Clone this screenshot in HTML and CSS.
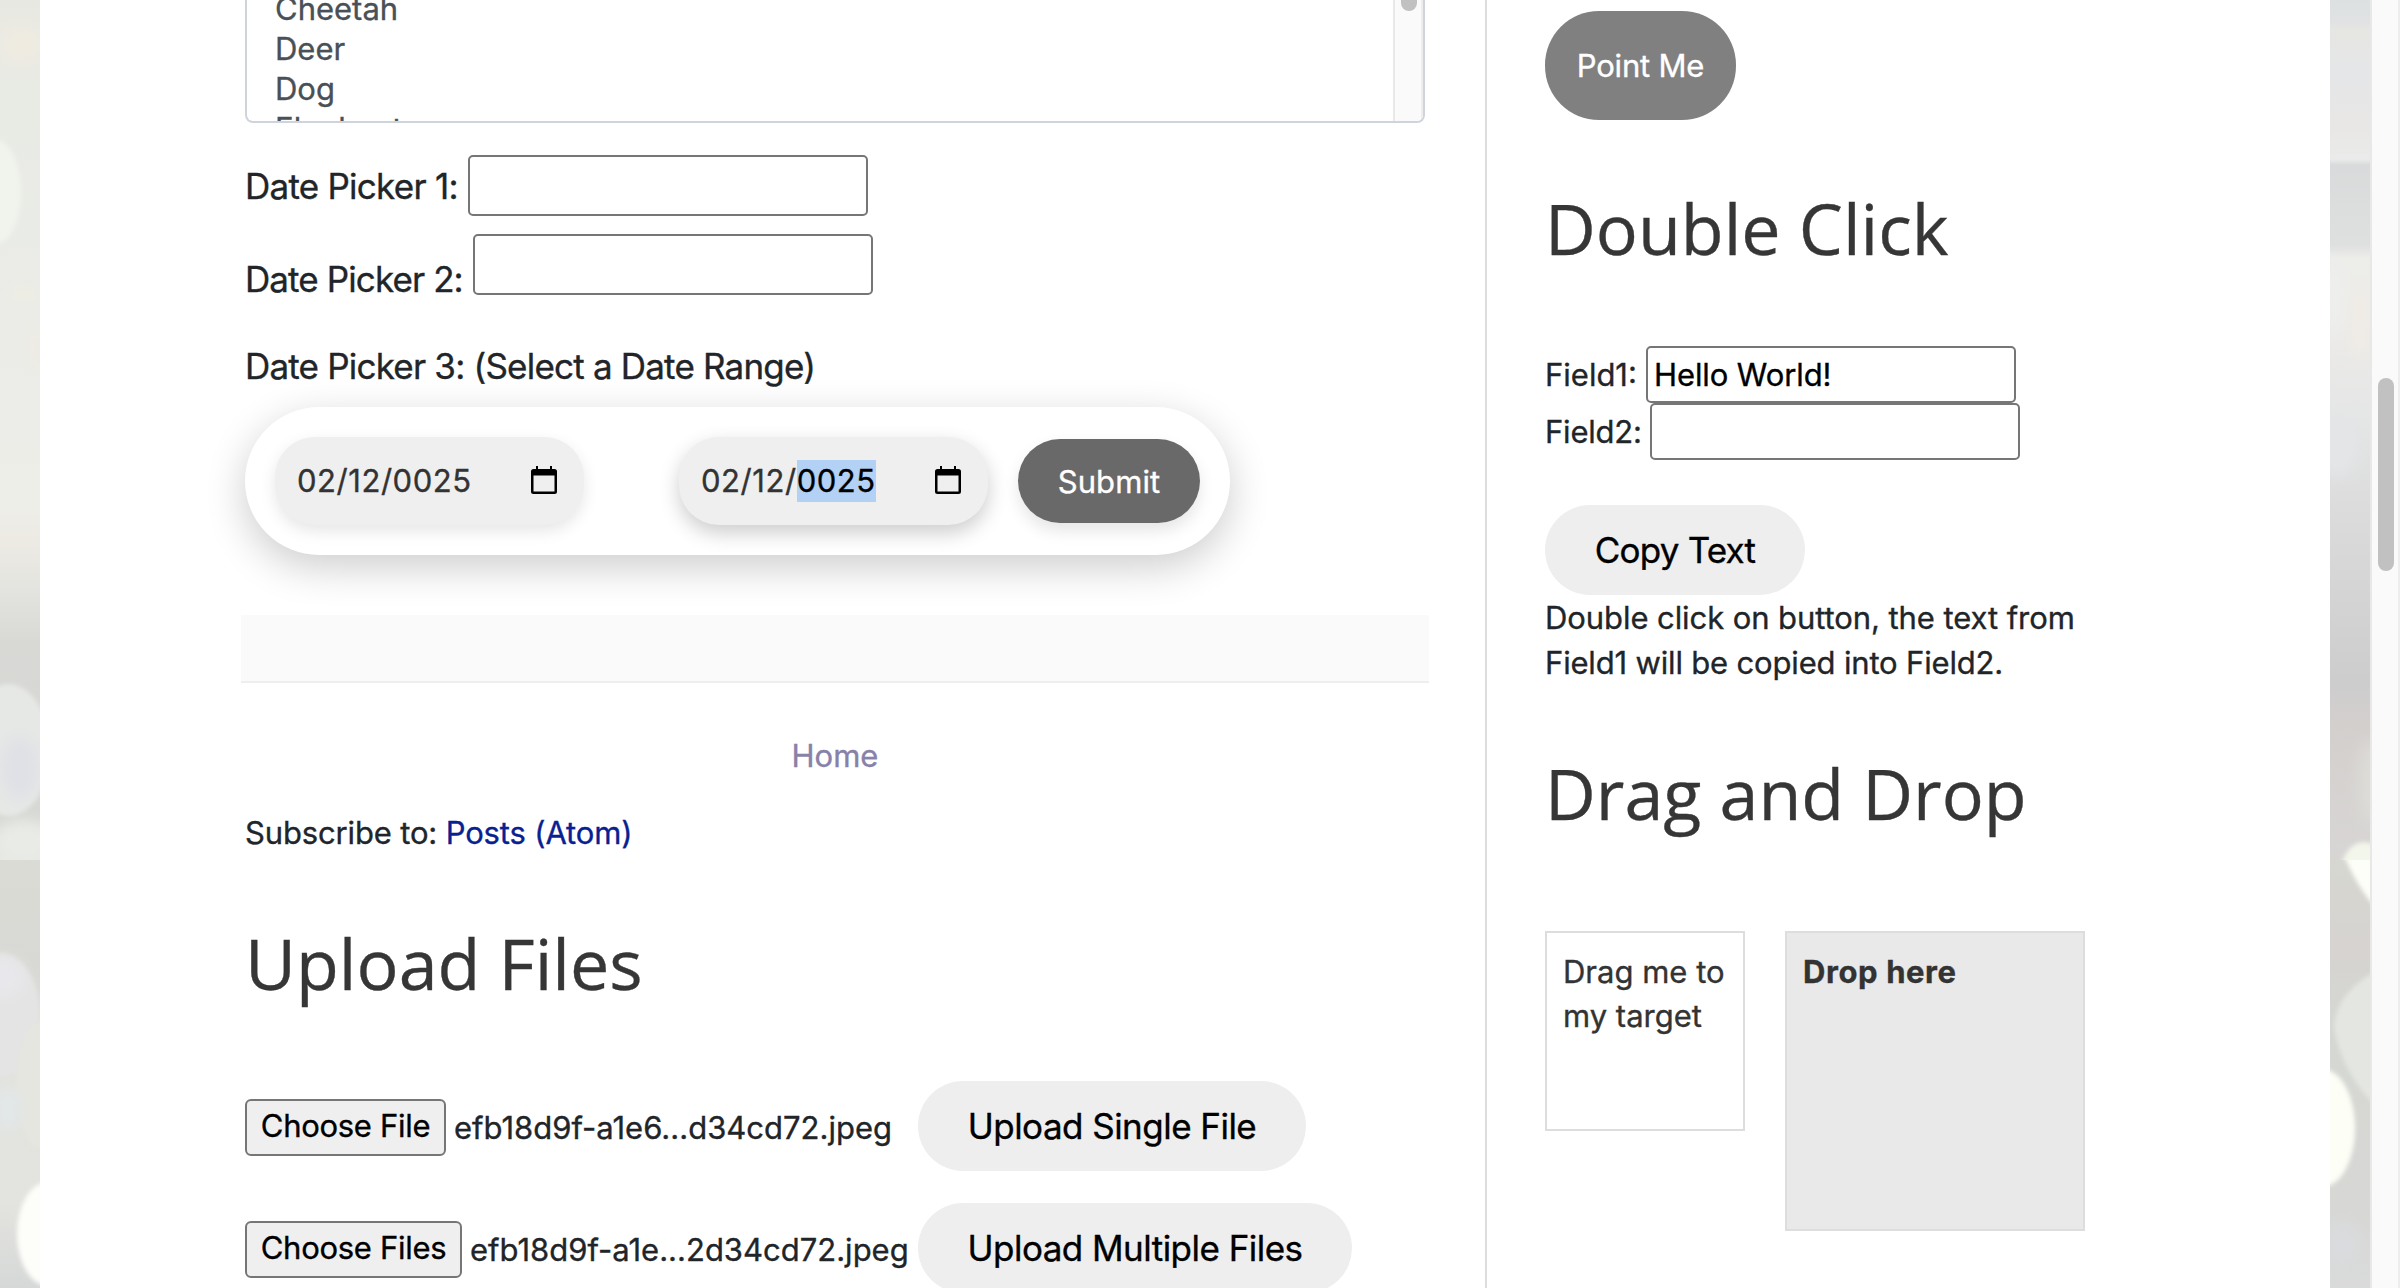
FILE: index.html
```html
<!DOCTYPE html>
<html lang="en">
<head>
<meta charset="utf-8">
<title>Automation Testing Practice</title>
<link rel="stylesheet" href="styles.css">
</head>
<body>
<div class="page">
  <svg class="backdrop" width="40" height="1288" viewBox="0 0 40 1288" aria-hidden="true">
    <defs>
      <linearGradient id="leftTop" x1="0" y1="0" x2="0" y2="1">
        <stop offset="0" stop-color="#e7e8e2"/><stop offset=".05" stop-color="#ecebe3"/><stop offset=".1" stop-color="#e8eae4"/>
        <stop offset=".4" stop-color="#ebece8"/><stop offset=".58" stop-color="#eeeee8"/><stop offset=".63" stop-color="#edeae4"/>
        <stop offset=".68" stop-color="#e4e5e0"/><stop offset=".75" stop-color="#d8d8d5"/><stop offset=".95" stop-color="#d6d8d4"/><stop offset="1" stop-color="#e6e8e3"/>
      </linearGradient>
      <linearGradient id="leftBottom" x1="0" y1="0" x2="0" y2="1">
        <stop offset="0" stop-color="#dadbd5"/><stop offset=".25" stop-color="#d8d9d4"/><stop offset=".5" stop-color="#e2e3dd"/><stop offset=".8" stop-color="#e3e4df"/><stop offset="1" stop-color="#d6d8d8"/>
      </linearGradient>
      <filter id="soft" x="-50%" y="-50%" width="200%" height="200%"><feGaussianBlur stdDeviation="2"/></filter>
      <filter id="softer" x="-50%" y="-50%" width="200%" height="200%"><feGaussianBlur stdDeviation="7"/></filter>
      <clipPath id="leftUpperTile"><rect width="40" height="860"/></clipPath>
      <clipPath id="leftLowerTile"><rect y="860" width="40" height="428"/></clipPath>
    </defs>
    <g clip-path="url(#leftUpperTile)">
      <rect width="40" height="860" fill="url(#leftTop)"/>
      <ellipse cx="-4" cy="192" rx="25" ry="52" fill="#f1f3ed" filter="url(#soft)"/>
      <ellipse cx="22" cy="45" rx="14" ry="16" fill="#f0ebe0" filter="url(#softer)"/>
      <ellipse cx="24" cy="294" rx="16" ry="6" fill="#efeee2" filter="url(#softer)"/>
      <ellipse cx="38" cy="350" rx="9" ry="22" fill="#eeebe3" filter="url(#softer)"/>
      <ellipse cx="8" cy="750" rx="42" ry="66" fill="#e6e8e6" filter="url(#soft)"/>
      <ellipse cx="20" cy="768" rx="20" ry="32" fill="#e0e1e6" filter="url(#softer)"/>
      <ellipse cx="24" cy="842" rx="30" ry="22" fill="#e9ebe7" filter="url(#softer)"/>
    </g>
    <g clip-path="url(#leftLowerTile)">
      <rect y="860" width="40" height="428" fill="url(#leftBottom)"/>
      <ellipse cx="0" cy="1015" rx="40" ry="62" fill="#e4e4e4" filter="url(#soft)"/>
      <ellipse cx="2" cy="978" rx="22" ry="20" fill="#e8e8ec" filter="url(#softer)"/>
      <ellipse cx="42" cy="1085" rx="26" ry="64" fill="#e5e6df" filter="url(#soft)"/>
      <ellipse cx="8" cy="1108" rx="14" ry="22" fill="#e2e7e9" filter="url(#softer)"/>
      <ellipse cx="48" cy="1234" rx="31" ry="52" fill="#fdfdf9" filter="url(#soft)"/>
    </g>
  </svg>

  <main class="sheet">
    <section class="content">
      <div class="animals">
        <ul class="animals-list"><li>Cheetah</li><li>Deer</li><li>Dog</li><li>Elephant</li></ul>
        <div class="animals-track"><div class="animals-thumb"></div></div>
      </div>

      <div class="date-row first"><label for="d1">Date Picker 1:</label><input id="d1" class="box" type="text"></div>
      <div class="date-row second"><label for="d2">Date Picker 2:</label><input id="d2" class="box" type="text"></div>
      <p class="range-title">Date Picker 3: (Select a Date Range)</p>

      <div class="range">
        <div class="date">
          <span>02/12/0025</span>
          <svg class="calendar" viewBox="0 0 26 29" width="26" height="29" aria-hidden="true"><path d="M5 0h2v3h12V0h2v3h2.500a2.500 2.500 0 0 1 2.500 2.500v20a2.500 2.500 0 0 1-2.500 2.500h-21A2.500 2.500 0 0 1 0 25.500v-20A2.500 2.500 0 0 1 2.500 3H5zM2.500 9.500v16h21v-16z" fill-rule="evenodd"/></svg>
        </div>
        <div class="date focused">
          <span>02/12/<mark>0025</mark></span>
          <svg class="calendar" viewBox="0 0 26 29" width="26" height="29" aria-hidden="true"><path d="M5 0h2v3h12V0h2v3h2.500a2.500 2.500 0 0 1 2.500 2.500v20a2.500 2.500 0 0 1-2.500 2.500h-21A2.500 2.500 0 0 1 0 25.500v-20A2.500 2.500 0 0 1 2.500 3H5zM2.500 9.500v16h21v-16z" fill-rule="evenodd"/></svg>
        </div>
        <button class="submit" type="button">Submit</button>
      </div>

      <div class="post-footer"></div>
      <a class="home" href="#">Home</a>
      <p class="feed">Subscribe to: <a href="#">Posts (Atom)</a></p>

      <h2 class="upload-title">Upload Files</h2>
      <div class="upload">
        <div class="file"><button class="choose" type="button">Choose File</button><span>efb18d9f-a1e6...d34cd72.jpeg</span></div>
        <button class="pill single" type="button">Upload Single File</button>
      </div>
      <div class="upload">
        <div class="file"><button class="choose plural" type="button">Choose Files</button><span>efb18d9f-a1e...2d34cd72.jpeg</span></div>
        <button class="pill multiple" type="button">Upload Multiple Files</button>
      </div>
    </section>

    <aside class="sidebar">
      <button class="point" type="button">Point Me</button>
      <h2 class="double-title">Double Click</h2>
      <div class="field one"><label for="f1">Field1:</label><input id="f1" class="box" type="text" value="Hello World!"></div>
      <div class="field two"><label for="f2">Field2:</label><input id="f2" class="box" type="text"></div>
      <button class="pill copy" type="button">Copy Text</button>
      <p class="hint">Double click on button, the text from<br><span>Field1 will be copied into Field2.</span></p>
      <h2 class="drag-title">Drag and Drop</h2>
      <div class="playground">
        <div class="drag">Drag me to<br>my target</div>
        <div class="drop">Drop here</div>
      </div>
    </aside>
  </main>

  <svg class="backdrop" width="40" height="1288" viewBox="0 0 40 1288" aria-hidden="true">
    <defs>
      <linearGradient id="rightTop" x1="0" y1="0" x2="0" y2="1">
        <stop offset="0" stop-color="#dde0e1"/><stop offset=".025" stop-color="#e0e2e3"/><stop offset=".035" stop-color="#e6e6e2"/>
        <stop offset=".08" stop-color="#e5e6e8"/><stop offset=".15" stop-color="#e8e7e5"/><stop offset=".185" stop-color="#eaebea"/>
        <stop offset=".192" stop-color="#d9dadb"/><stop offset=".24" stop-color="#dcdddd"/><stop offset=".285" stop-color="#dedfdf"/>
        <stop offset=".3" stop-color="#ededea"/><stop offset=".4" stop-color="#ebeae8"/><stop offset=".48" stop-color="#e5e6e6"/>
        <stop offset=".6" stop-color="#dbdbdc"/><stop offset=".79" stop-color="#cdcdce"/><stop offset=".84" stop-color="#d3cfcd"/>
        <stop offset="1" stop-color="#d8d6d5"/>
      </linearGradient>
      <linearGradient id="rightBottom" x1="0" y1="0" x2="0" y2="1">
        <stop offset="0" stop-color="#d6d7d1"/><stop offset=".22" stop-color="#d6d3d0"/><stop offset=".35" stop-color="#d5d7d2"/><stop offset=".8" stop-color="#d7d8d5"/><stop offset="1" stop-color="#d9dada"/>
      </linearGradient>
      <clipPath id="rightUpperTile"><rect width="40" height="860"/></clipPath>
      <clipPath id="rightLowerTile"><rect y="860" width="40" height="428"/></clipPath>
    </defs>
    <g clip-path="url(#rightUpperTile)">
      <rect width="40" height="860" fill="url(#rightTop)"/>
      <ellipse cx="4" cy="300" rx="10" ry="35" fill="#eef0ee" filter="url(#softer)"/>
      <ellipse cx="30" cy="320" rx="10" ry="40" fill="#f0ece6" filter="url(#softer)"/>
      <ellipse cx="8" cy="445" rx="20" ry="32" fill="#e4e5e7" filter="url(#softer)"/>
      <ellipse cx="40" cy="782" rx="12" ry="42" fill="#dddcd7" filter="url(#softer)"/>
      <ellipse cx="34" cy="876" rx="24" ry="34" fill="#f3f6ea" filter="url(#soft)"/>
    </g>
    <g clip-path="url(#rightLowerTile)">
      <rect y="860" width="40" height="428" fill="url(#rightBottom)"/>
      <path d="M14 856h30v50Q28 888 14 856z" fill="#fcfef7" filter="url(#soft)"/>
      <path d="M44 972Q5 995 4 1028Q12 1072 44 1104z" fill="#e4e6e2" filter="url(#soft)"/>
      <ellipse cx="-8" cy="1128" rx="33" ry="59" fill="#fdfef6" filter="url(#soft)"/>
      <ellipse cx="12" cy="1245" rx="16" ry="22" fill="#dadbde" filter="url(#softer)"/>
    </g>
  </svg>
  <div class="scroll"><div class="scroll-thumb"></div></div>
</div>
</body>
</html>
```
FILE: styles.css
```css
* { box-sizing: border-box; }

body {
  margin: 0;
  font: 31px "Inter", "Liberation Sans", sans-serif;
  color: #212529;
  background: #fff;
  -webkit-text-stroke: .35px currentColor;
}

p, h2, ul { margin: 0; padding: 0; }
button, input { font: inherit; margin: 0; border: 0; padding: 0; color: #000; }
a { text-decoration: none; }

.page { display: flex; height: 1288px; overflow: hidden; }
.backdrop { flex: none; display: block; }
.sheet { display: flex; width: 2290px; height: 1288px; background: #fff; overflow: hidden; }

.content { width: 1447px; padding-left: 205px; border-right: 2px solid #ddd; flex: none; }
.sidebar { flex: 1; padding: 11px 0 0 58px; }

/* animal list */
.animals {
  display: flex;
  justify-content: space-between;
  width: 1180px;
  height: 123px;
  border: 2px solid #ced4da;
  border-top: 0;
  border-radius: 0 0 8px 8px;
  overflow: hidden;
}
.animals-list { list-style: none; margin-top: -11px; padding-left: 28px; line-height: 40px; color: #495057; }
.animals-track { width: 30px; background: #fafafa; border-left: 2px solid #e8e8e8; border-right: 2px solid #ededed; padding-left: 6px; }
.animals-thumb { width: 16px; height: 11px; background: #c1c1c1; border-radius: 0 0 8px 8px; }

/* date pickers */
.box { background: #fff; border: 2px solid #767676; border-radius: 5px; outline: 0; }
.date-row { display: flex; font-size: 35px; letter-spacing: -.75px; line-height: 61px; height: 61px; }
.date-row .box { width: 400px; height: 61px; }
.first { margin-top: 32px; }
.first label { width: 223px; padding-top: 1px; }
.second { margin-top: 18px; }
.second label { width: 228px; padding-top: 15px; letter-spacing: -.9px; }
.range-title { margin-top: 51px; font-size: 35px; line-height: 40px; letter-spacing: -.8px; white-space: nowrap; }

.range {
  display: flex;
  align-items: center;
  width: 985px;
  height: 148px;
  margin-top: 21px;
  padding: 0 30px;
  border-radius: 74px;
  background: #fff;
  box-shadow: 0 12px 40px rgba(0, 0, 0, .2);
}
.date {
  display: flex;
  align-items: center;
  justify-content: space-between;
  width: 309px;
  height: 88px;
  margin-right: 95px;
  padding: 0 27px 0 22px;
  border-radius: 40px;
  background: #efefef;
  color: #333;
  letter-spacing: .55px;
  line-height: 42px;
  box-shadow: 0 6px 16px rgba(0, 0, 0, .1);
}
.date.focused { margin-right: 30px; box-shadow: 0 8px 20px rgba(0, 0, 0, .2); }
.date mark { display: inline-block; background: #b3d0f5; color: #000; }
.calendar { fill: #000; margin-top: -2px; }
.submit {
  width: 182px;
  height: 84px;
  border-radius: 42px;
  background: #696969;
  color: #fff;
  letter-spacing: .1px;
  box-shadow: 0 8px 16px rgba(0, 0, 0, .1);
}

/* post footer and links */
.post-footer { width: 1188px; height: 68px; margin: 60px 0 0 -4px; background: #fafafa; border-bottom: 2px solid #eee; }
.home { display: block; width: 1180px; margin-top: 53px; line-height: 40px; text-align: center; color: #8881a9; }
.feed { margin-top: 37px; line-height: 40px; letter-spacing: -.15px; }
.feed a { color: #0a1f91; }

/* headings */
h2 { font: 400 70px/80px "Open Sans", sans-serif; color: #363636; white-space: nowrap; }
.upload-title { margin-top: 70px; }

/* uploads */
.upload { display: flex; align-items: center; height: 90px; margin-bottom: 32px; white-space: nowrap; }
.upload-title + .upload { margin-top: 78px; }
.file { display: flex; align-items: center; width: 673px; padding-top: 3px; line-height: 56px; }
.choose {
  width: 201px;
  height: 57px;
  margin-right: 8px;
  padding-bottom: 3px;
  border: 2px solid #767676;
  border-radius: 6px;
  background: #efefef;
  letter-spacing: -.3px;
  line-height: 50px;
}
.choose.plural { width: 217px; }
.pill { height: 90px; border-radius: 45px; background: #eee; font-size: 35px; letter-spacing: -.53px; }
.single { width: 388px; }
.multiple { width: 434px; }

/* sidebar */
.point { display: block; width: 191px; height: 109px; border-radius: 54px; background: #808080; color: #fff; letter-spacing: -.2px; }
.double-title { margin-top: 68px; }
.field { display: flex; line-height: 57px; height: 57px; }
.field .box { width: 370px; height: 57px; padding: 0 6px; letter-spacing: -.1px; }
.one { margin-top: 78px; }
.one label { width: 101px; }
.two label { width: 105px; letter-spacing: -.2px; }
.copy { display: block; width: 260px; margin-top: 45px; letter-spacing: -.8px; }
.hint { line-height: 45px; letter-spacing: -.08px; white-space: nowrap; }
.hint span { letter-spacing: -.17px; }
.drag-title { margin-top: 68px; }
.playground { display: flex; gap: 40px; margin-top: 98px; color: #333; line-height: 44px; }
.drag { width: 200px; height: 200px; padding: 17px 0 0 16px; border: 2px solid #ddd; white-space: nowrap; }
.drop { width: 300px; height: 300px; padding: 17px 16px; border: 2px solid #ddd; background: #e9e9e9; font-weight: 700; letter-spacing: .6px; }

/* window scrollbar */
.scroll { width: 30px; padding: 378px 0 0 6px; background: #fafafa; border-left: 2px solid #e8e8e8; border-right: 2px solid #ededed; }
.scroll-thumb { width: 16px; height: 193px; border-radius: 8px; background: #c1c1c1; }
```
